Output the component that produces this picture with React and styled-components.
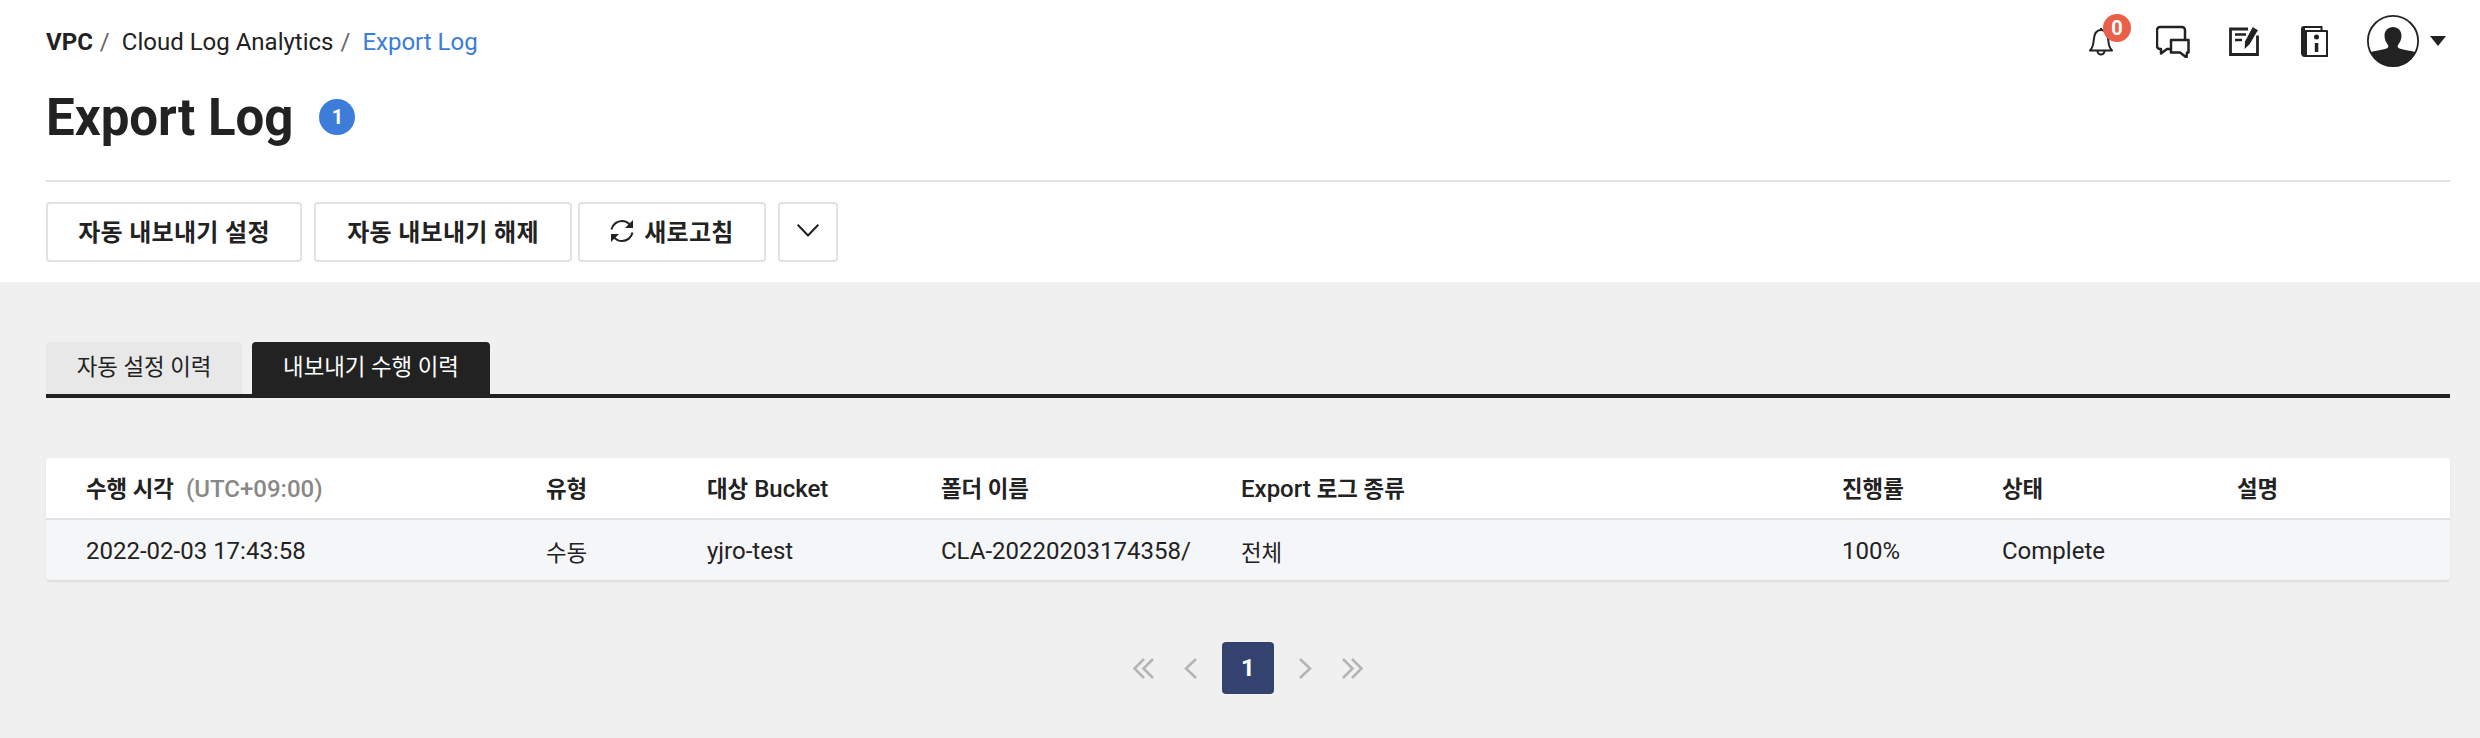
import React from 'react'
import styled, { createGlobalStyle } from 'styled-components'

const GlobalStyle = createGlobalStyle`
  html, body {
    margin: 0;
    padding: 0;
    background: #f0f0f0;
  }
  body {
    font-family: Roboto, "Noto Sans CJK KR", sans-serif;
    color: #222;
  }
  * {
    box-sizing: border-box;
  }
`

const Page = styled.div`
  width: 2480px;
  height: 738px;
  overflow: hidden;
  background: #f0f0f0;
`

const Header = styled.header`
  background: #fff;
  padding: 15px 34px 20px 46px;
`

const TopRow = styled.div`
  display: flex;
  justify-content: space-between;
  align-items: center;
  height: 52px;
`

const Breadcrumb = styled.nav`
  display: flex;
  align-items: center;
  padding-top: 2px;
  font-size: 24px;
  line-height: 32px;
`

const Crumb = styled.span`
  font-weight: ${p => (p.$root ? 700 : 400)};
  color: ${p => (p.$current ? '#3b7dd8' : '#222')};
`

const Slash = styled.span`
  color: #666;
  margin: 0 12px 0 7px;
`

const IconBar = styled.div`
  display: flex;
  align-items: center;
`

const IconSlot = styled.div`
  position: relative;
  display: flex;
  margin-left: ${p => p.$gap}px;
`

const CountBadge = styled.span`
  position: absolute;
  left: 14px;
  top: -12px;
  width: 28px;
  height: 28px;
  border-radius: 50%;
  background: #e95f47;
  color: #fff;
  font-size: 20px;
  font-weight: 700;
  line-height: 28px;
  text-align: center;
`

const TitleRow = styled.div`
  display: flex;
  align-items: center;
  height: 48px;
  margin-top: 26px;
`

const Title = styled.h1`
  margin: 0;
  padding-top: 2px;
  font-size: 51px;
  line-height: 48px;
  font-weight: 700;
`

const TitleBadge = styled.span`
  width: 36px;
  height: 36px;
  margin-left: 26px;
  border-radius: 50%;
  background: #3b7dd8;
  color: #fff;
  font-size: 20px;
  font-weight: 700;
  line-height: 36px;
  text-align: center;
`

const Rule = styled.div`
  height: 2px;
  margin: 39px -4px 0 0;
  background: #e2e2e2;
`

const Toolbar = styled.div`
  display: flex;
  margin-top: 20px;
`

const ToolButton = styled.button`
  display: flex;
  align-items: center;
  justify-content: center;
  gap: 10px;
  width: ${p => p.$w}px;
  height: 60px;
  margin-right: ${p => p.$mr}px;
  padding: 0 0 3px;
  background: #fff;
  border: 2px solid #e2e2e2;
  border-radius: 4px;
  color: #222;
  font-family: inherit;
  font-size: 24px;
  font-weight: 700;
  letter-spacing: 0.3px;
`

const Main = styled.main`
  padding: 60px 30px 0 46px;
`

const Tabs = styled.div`
  display: flex;
  height: 56px;
  border-bottom: 4px solid #222;
`

const Tab = styled.div`
  width: ${p => p.$w}px;
  height: 52px;
  margin-right: 10px;
  border-radius: 4px 4px 0 0;
  background: ${p => (p.$active ? '#222' : '#e8e8e8')};
  color: ${p => (p.$active ? '#fff' : '#222')};
  font-size: 22.4px;
  line-height: 50px;
  text-align: center;
`

const Table = styled.div`
  margin-top: 60px;
  border-radius: 4px;
  overflow: hidden;
  box-shadow: 0 2px 2px rgba(0, 0, 0, 0.08);
`

const Hangul = styled.span`
  font-size: 22.4px;
`

const Row = styled.div`
  display: grid;
  grid-template-columns: 460px 161px 234px 300px 601px 160px 235px 1fr;
  align-items: center;
  height: ${p => (p.$head ? 62 : 60)}px;
  padding: ${p => (p.$head ? '0 0 3px 40px' : '2px 0 0 40px')};
  background: ${p => (p.$head ? '#fff' : '#f5f6f8')};
  border-bottom: ${p => (p.$head ? '2px solid #e2e2e2' : 'none')};
  font-size: 24px;
  font-weight: ${p => (p.$head ? 500 : 400)};

  ${Hangul} {
    font-weight: ${p => (p.$head ? 700 : 400)};
  }
`

const Muted = styled.span`
  margin-left: 12px;
  color: #888;
`

const Pager = styled.div`
  display: flex;
  align-items: center;
  justify-content: center;
  margin-top: 62px;
  color: #b4b4b4;
`

const PagerArrow = styled.span`
  display: flex;
  margin-left: ${p => p.$ml}px;
`

const PageButton = styled.span`
  width: 52px;
  height: 52px;
  margin-left: 25px;
  border-radius: 4px;
  background: #34426f;
  color: #fff;
  font-size: 24px;
  font-weight: 700;
  line-height: 52px;
  text-align: center;
`

const BellIcon = () => (
  <svg width="24" height="30" viewBox="0 0 24 30" fill="none" stroke="#222" strokeWidth="2" strokeLinejoin="round">
    <path d="M1 24.500h22c-2.800-2.500-3.300-5.500-3.700-10C19 8.500 16.500 4 12 4S5 8.500 4.700 14.500c-.4 4.500-.9 7.500-3.700 10z" />
    <path d="M12 4V2" />
    <path d="M8.500 25a3.500 3.500 0 0 0 7 0" />
  </svg>
)

const ChatIcon = () => (
  <svg width="34" height="34" viewBox="0 0 34 34" fill="none" stroke="#222" strokeWidth="2.500" strokeLinejoin="round">
    <path d="M15 25h-4l-6 4.500V25H4a3 3 0 0 1-3-3V6a3 3 0 0 1 3-3h22a3 3 0 0 1 3 3v9.500" />
    <path d="M15 16h17.500v12.500H31l-.5 5-6.500-5h-9z" fill="#fff" />
  </svg>
)

const NoteIcon = () => (
  <svg width="30" height="30" viewBox="0 0 30 30" fill="none">
    <path d="M19 3H1.500v25.500h27V9.500" stroke="#222" strokeWidth="2.800" />
    <path d="M6 8.500h11M6 14h7" stroke="#222" strokeWidth="2.400" />
    <path d="M23.500 .5l6 3.500-8.500 14.500-6 5.500 .5-8.500z" fill="#222" stroke="#fff" strokeWidth="1" />
  </svg>
)

const BookIcon = () => (
  <svg width="27" height="33" viewBox="0 0 27 33" fill="none">
    <path d="M3 1h18.500v4H26a1 1 0 0 1 1 1v26H4a4 4 0 0 1-4-3.500V4a3 3 0 0 1 3-3z" fill="#222" />
    <path d="M4 3h15.500v2H4zM6 7h19v23H6z" fill="#fff" />
    <circle cx="15.500" cy="12" r="2.500" fill="#222" />
    <path d="M13.800 18h3.500v9h-3.500z" fill="#222" />
  </svg>
)

const AvatarIcon = () => (
  <svg width="52" height="52" viewBox="0 0 52 52">
    <defs>
      <clipPath id="avatar-clip">
        <circle cx="26" cy="26" r="25" />
      </clipPath>
    </defs>
    <circle cx="26" cy="26" r="25.100" fill="#fff" stroke="#222" strokeWidth="1.800" />
    <g clipPath="url(#avatar-clip)" fill="#222">
      <path d="M26 12c5 0 8.500 3.700 8.500 8.500 0 3.700-1.500 7-3.300 9.200-.8 1-.8 2.800 .7 3.500 3.500 1.800 12 2.300 20.100 4.800V52H0V38c8-2.500 16.600-3 20.100-4.800 1.500-.7 1.500-2.500 .7-3.500-1.800-2.200-3.300-5.500-3.300-9.200C17.500 15.700 21 12 26 12z" />
    </g>
  </svg>
)

const CaretIcon = () => (
  <svg width="16" height="10" viewBox="0 0 16 10">
    <path d="M0 0h16L8 10z" fill="#222" />
  </svg>
)

const RefreshIcon = () => (
  <svg width="24" height="24" viewBox="0 0 24 24" fill="none" stroke="#222" strokeWidth="2">
    <path d="M1.500 10.500C2.500 5.500 6.800 2 12 2c3.200 0 5.800 1.300 7.800 3.700" />
    <path d="M22.500 13.500c-1 5-5.300 8.500-10.500 8.500-3.200 0-5.800-1.300-7.800-3.700" />
    <path d="M23 1v8h-8zM1 23v-8h8z" fill="#222" stroke="none" />
  </svg>
)

const ChevronDown = () => (
  <svg width="22" height="13" viewBox="0 0 22 13" fill="none" stroke="#222" strokeWidth="2">
    <path d="M.7 .7L11 11.500 21.300 .7" />
  </svg>
)

const Chevron = ({ left, double }) => (
  <svg
    width={double ? 21 : 13}
    height="21"
    viewBox={double ? '0 0 21 21' : '0 0 13 21'}
    fill="none"
    stroke="currentColor"
    strokeWidth="2.600"
  >
    {double ? (
      <path d={left ? 'M11 1L1.500 10.500 11 20M20 1L10.500 10.500 20 20' : 'M10 1l9.500 9.500L10 20M1 1l9.500 9.500L1 20'} />
    ) : (
      <path d={left ? 'M12 1L2 10.500 12 20' : 'M1 1l10 9.500L1 20'} />
    )}
  </svg>
)

// hangul runs are set a bit smaller than the latin next to them
const mixed = text =>
  text.split(/([가-힣]+(?: [가-힣]+)*)/).map((part, i) =>
    /[가-힣]/.test(part) ? <Hangul key={i}>{part}</Hangul> : part
  )

const columns = ['유형', '대상 Bucket', '폴더 이름', 'Export 로그 종류', '진행률', '상태', '설명']
const record = ['2022-02-03 17:43:58', '수동', 'yjro-test', 'CLA-20220203174358/', '전체', '100%', 'Complete', '']

export default function App() {
  return (
    <Page>
      <GlobalStyle />
      <Header>
        <TopRow>
          <Breadcrumb>
            <Crumb $root>VPC</Crumb>
            <Slash>/</Slash>
            <Crumb>Cloud Log Analytics</Crumb>
            <Slash>/</Slash>
            <Crumb $current>Export Log</Crumb>
          </Breadcrumb>
          <IconBar>
            <IconSlot $gap={0}>
              <BellIcon />
              <CountBadge>0</CountBadge>
            </IconSlot>
            <IconSlot $gap={43}>
              <ChatIcon />
            </IconSlot>
            <IconSlot $gap={39}>
              <NoteIcon />
            </IconSlot>
            <IconSlot $gap={42}>
              <BookIcon />
            </IconSlot>
            <IconSlot $gap={39}>
              <AvatarIcon />
            </IconSlot>
            <IconSlot $gap={11}>
              <CaretIcon />
            </IconSlot>
          </IconBar>
        </TopRow>
        <TitleRow>
          <Title>Export Log</Title>
          <TitleBadge>1</TitleBadge>
        </TitleRow>
        <Rule />
        <Toolbar>
          <ToolButton $w={256} $mr={12}>자동 내보내기 설정</ToolButton>
          <ToolButton $w={258} $mr={6}>자동 내보내기 해제</ToolButton>
          <ToolButton $w={188} $mr={12}>
            <RefreshIcon />
            새로고침
          </ToolButton>
          <ToolButton $w={60} $mr={0}>
            <ChevronDown />
          </ToolButton>
        </Toolbar>
      </Header>
      <Main>
        <Tabs>
          <Tab $w={196}>자동 설정 이력</Tab>
          <Tab $w={238} $active>내보내기 수행 이력</Tab>
        </Tabs>
        <Table>
          <Row $head>
            <span>
              <Hangul>수행 시각</Hangul>
              <Muted>(UTC+09:00)</Muted>
            </span>
            {columns.map(c => (
              <span key={c}>{mixed(c)}</span>
            ))}
          </Row>
          <Row>
            {record.map((v, i) => (
              <span key={i}>{mixed(v)}</span>
            ))}
          </Row>
        </Table>
        <Pager>
          <PagerArrow $ml={0}><Chevron left double /></PagerArrow>
          <PagerArrow $ml={30}><Chevron left /></PagerArrow>
          <PageButton>1</PageButton>
          <PagerArrow $ml={25}><Chevron /></PagerArrow>
          <PagerArrow $ml={30}><Chevron double /></PagerArrow>
        </Pager>
      </Main>
    </Page>
  )
}
